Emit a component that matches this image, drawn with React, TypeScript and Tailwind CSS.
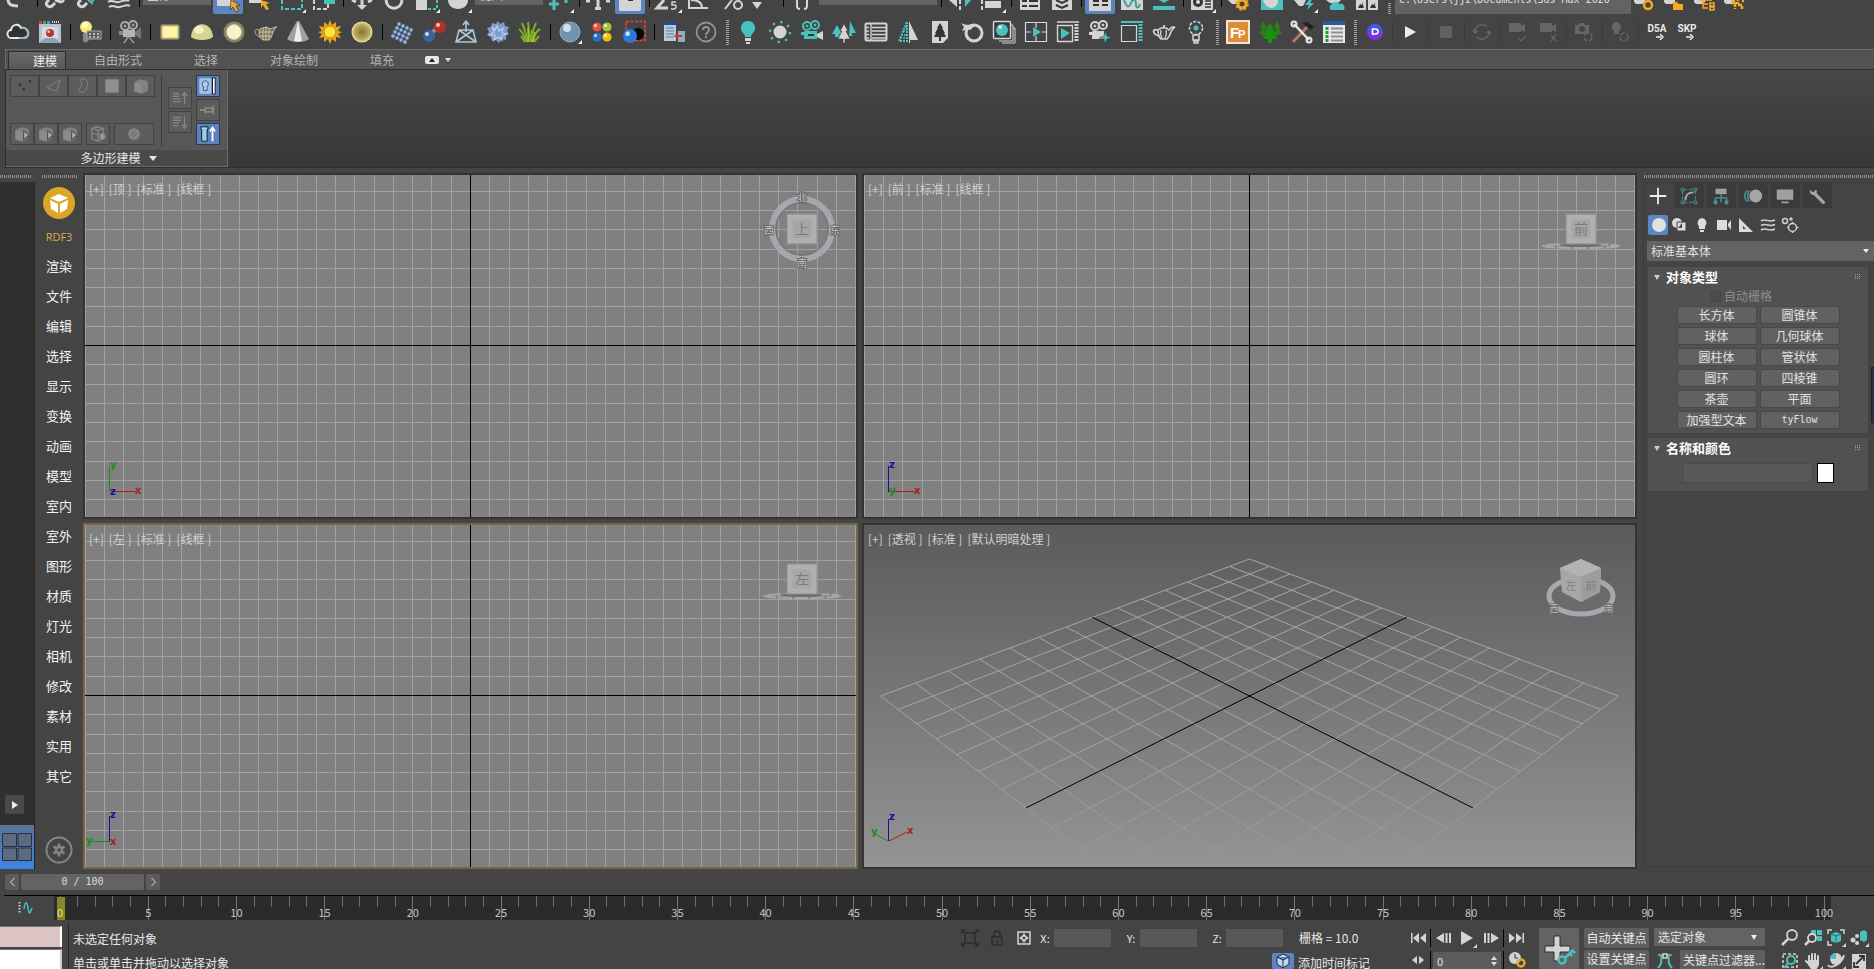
import React from 'react';

type IconProps = { children: React.ReactNode };

const teal = '#4bc1bd';
const light = '#d4d4d4';

const sideItems = [
  '渲染', '文件', '编辑', '选择', '显示', '变换', '动画', '模型', '室内',
  '室外', '图形', '材质', '灯光', '相机', '修改', '素材', '实用', '其它',
];

const ribbonTabs = [
  { name: '自由形式', width: 'w-[104px]' },
  { name: '选择', width: 'w-[72px]' },
  { name: '对象绘制', width: 'w-[104px]' },
  { name: '填充', width: 'w-[72px]' },
];

const objectTypes = [
  '长方体', '圆锥体', '球体', '几何球体', '圆柱体', '管状体',
  '圆环', '四棱锥', '茶壶', '平面', '加强型文本', 'tyFlow',
];

/* ---------- small shared parts ---------- */

const Sep = () => (
  <span className="flex w-2 shrink-0 justify-center self-center">
    <span className="h-4 w-px bg-black" />
  </span>
);

const TopSep = () => (
  <span className="flex h-[7px] w-1.5 shrink-0 justify-center">
    <span className="h-full w-px bg-black" />
  </span>
);

const ThinSep = () => (
  <span className="flex w-1 shrink-0 justify-center self-center">
    <span className="h-6 w-px bg-[#3b3b3b]" />
  </span>
);

const GripV = ({ height = 'h-[26px]' }: { height?: string }) => (
  <span className="flex w-2.5 shrink-0 justify-center self-center">
    <span className={`${height} w-[3px] bg-[repeating-linear-gradient(0deg,#a5a5a5_0_1px,transparent_1px_2px)]`} />
  </span>
);

const GripH = ({ className }: { className: string }) => (
  <div className={`h-[3px] bg-[repeating-linear-gradient(90deg,#8f8f8f_0_1px,transparent_1px_2px)] ${className}`} />
);

// 24px icon in a 32px wide slot of the second toolbar row
const Tool = ({ label, width = 'w-8', children }: { label: string; width?: string } & IconProps) => (
  <button aria-label={label} className={`flex h-full ${width} shrink-0 items-center justify-center`}>
    <svg viewBox="0 0 24 24" className="size-6">{children}</svg>
  </button>
);

// lower part of a main toolbar icon, the row is scrolled half out of the window
const Top = ({ label, width = 'w-8', active = false, children }: { label: string; width?: string; active?: boolean } & IconProps) => (
  <button aria-label={label} className={`flex h-3.5 ${width} shrink-0 justify-center`}>
    <svg viewBox="0 0 30 14" className={`h-3.5 w-[30px] ${active ? 'rounded-b-xs bg-[#5b86c3]' : ''}`}>{children}</svg>
  </button>
);

const Corner = () => <path d="M29 9v4h-4z" fill="#eee" />;

const DropSelect = ({ label, value, className }: { label: string; value: string; className: string }) => (
  <select aria-label={label} defaultValue={value} className={`block appearance-none bg-[#636363] text-[#e0e0e0] outline-none ${className}`}>
    <option>{value}</option>
  </select>
);

/* ---------- toolbars ---------- */

const MainToolbar = () => (
  <div className="flex h-4 shrink-0 items-start overflow-hidden">
    <Top label="重做" width="w-[34px]">
      <path d="M6 0c0 4 3 6 10 6" fill="none" stroke={light} strokeWidth="3" />
    </Top>
    <TopSep />
    <Top label="链接">
      <path d="M8 0l-2 2c-2 3 2 6 5 4l3-3M14 0l6 2c2-1 3-2 1-2" fill="none" stroke={light} strokeWidth="3" />
    </Top>
    <Top label="断开链接">
      <path d="M8 0l-2 2c-2 3 2 6 5 4l3-3" fill="none" stroke={light} strokeWidth="3" />
      <path d="M15 0l5 4M18 0l3 1" stroke={teal} strokeWidth="2" />
    </Top>
    <Top label="绑定到空间扭曲">
      <path d="M3 2c4-3 7 1 11 0s7-3 10-1M4 7c4-3 7 1 11 0s7-3 10-1" fill="none" stroke={light} strokeWidth="2" />
    </Top>
    <TopSep />
    <DropSelect label="选择过滤器" value="全部" className="-mt-[15px] h-5 w-[70px] border-x border-[#444] pl-1 text-xs" />
    <Top label="选择对象" active>
      <path d="M4 0h16v6H4z" fill={light} />
      <path d="M18 0l9 5-4 1 3 5-3 1-3-5-3 3z" fill="#f7a823" stroke="#222" strokeWidth=".6" />
    </Top>
    <Top label="按名称选择">
      <path d="M4 0h12v3H4z" fill={light} />
      <path d="M16 0l9 3-4 1 3 5-3 1-3-5-2 3z" fill="#f7a823" />
    </Top>
    <Top label="矩形选择区域">
      <path d="M5 0v9h20V0" fill="none" stroke={teal} strokeWidth="2" strokeDasharray="4 2" />
      <Corner />
    </Top>
    <Top label="窗口/交叉">
      <path d="M5 0v9h14V2" fill="none" stroke={light} strokeWidth="2" strokeDasharray="4 2" />
      <path d="M15 0h11v4H15z" fill={teal} />
    </Top>
    <TopSep />
    <Top label="移动">
      <path d="M15 0v6M5 0l4 2M25 0l-4 2" stroke={light} strokeWidth="3" />
      <path d="M10 5h10l-5 5z" fill={light} />
    </Top>
    <Top label="旋转">
      <path d="M7 0c1 11 15 11 16 0" fill="none" stroke={light} strokeWidth="3" />
    </Top>
    <Top label="缩放">
      <path d="M5 0h11v10H5z" fill={light} />
      <path d="M17 9h9V0" fill="none" stroke={teal} strokeWidth="2" strokeDasharray="3 2" />
      <Corner />
    </Top>
    <Top label="放置">
      <path d="M5 0h20c0 5-4 9-10 9S5 5 5 0z" fill={light} />
      <Corner />
    </Top>
    <DropSelect label="参考坐标系" value="视图" className="-mt-[15px] h-5 w-[70px] border-x border-[#444] pl-1 text-xs" />
    <Top label="使用轴点中心">
      <path d="M9 0v10M4 4h10M21 0v3" stroke={teal} strokeWidth="3" />
      <Corner />
    </Top>
    <TopSep />
    <Top label="选择并操纵">
      <path d="M15 0v10M3 1h4M23 1h4" stroke={light} strokeWidth="3" />
      <path d="M12 7h6v3h-6z" fill={light} />
    </Top>
    <Top label="键盘快捷键覆盖切换" active>
      <path d="M4 0h22v9c0 2-1 2-2 2H6c-1 0-2 0-2-2z" fill={light} />
      <path d="M13 0h5v1h-5z" fill="#333" />
    </Top>
    <TopSep />
    <Top label="捕捉开关">
      <path d="M11 0L4 8h11" fill="none" stroke={light} strokeWidth="3" />
      <path d="M23 2h-4v3h3c2 1 1 4-1 4h-3" fill="none" stroke={light} strokeWidth="1.5" />
      <Corner />
    </Top>
    <Top label="角度捕捉">
      <path d="M4 0v8h19M6 0c8 0 11 3 11 8" fill="none" stroke={light} strokeWidth="2" />
    </Top>
    <Top label="百分比捕捉">
      <path d="M15 0L8 9" stroke={light} strokeWidth="2" />
      <circle cx="21" cy="5" r="4" fill="none" stroke={light} strokeWidth="2" />
    </Top>
    <Top label="微调器捕捉">
      <path d="M3 2h10l-5 7z" fill={light} />
    </Top>
    <TopSep />
    <Top label="编辑命名选择集">
      <path d="M10 0v6c0 2 1 3 3 3M20 0v6c0 2-1 3-3 3" fill="none" stroke={light} strokeWidth="2" />
    </Top>
    <DropSelect label="命名选择集" value="" className="-mt-[15px] h-5 w-[120px] border-x border-[#444]" />
    <TopSep />
    <Top label="镜像">
      <path d="M4 0h8v7z" fill={light} />
      <path d="M26 0h-6v7z" fill={teal} />
      <path d="M15 0v10" stroke={light} strokeWidth="2" strokeDasharray="4 2" />
    </Top>
    <Top label="对齐">
      <path d="M8 1h16v7H8z" fill={light} />
      <path d="M5 0v10" stroke={light} strokeWidth="2" strokeDasharray="4 2" />
      <Corner />
    </Top>
    <TopSep />
    <Top label="场景资源管理器">
      <path d="M5 0h20v10H5z" fill={light} />
      <path d="M7 1h5M14 1h9M7 6h5M14 6h9" stroke="#333" strokeWidth="2" />
    </Top>
    <Top label="层资源管理器">
      <path d="M5 0h20v10H5z" fill={light} />
      <path d="M9 0l6 3 6-3M9 5l6 3 6-3" fill="none" stroke="#333" strokeWidth="2" />
    </Top>
    <TopSep />
    <Top label="显示功能区" active>
      <path d="M4 0h22v11H4z" fill={light} />
      <path d="M8 1h6M17 1h6M8 5h6M17 5h6" stroke="#333" strokeWidth="2" />
    </Top>
    <Top label="曲线编辑器">
      <path d="M4 0h22v10H4z" fill={light} />
      <path d="M7 0c3 8 5 8 7 3s5-4 5 1 3 4 4 0" fill="none" stroke="#3e9c9a" strokeWidth="2" />
    </Top>
    <Top label="图解视图">
      <path d="M4 6h22v4H4z" fill={teal} />
      <path d="M10 0h10l-5 3z" fill={teal} />
    </Top>
    <TopSep />
    <Top label="材质编辑器">
      <path d="M4 0h22v10H4z" fill={light} />
      <circle cx="11" cy="2" r="5" fill="#333" />
      <path d="M8 0l6 5M8 5l6-5M18 1h6M18 4h6M18 7h6" stroke="#333" strokeWidth="1.5" />
      <circle cx="11" cy="2" r="2" fill="#ddd" />
      <Corner />
    </Top>
    <TopSep />
    <Top label="渲染设置">
      <path d="M3 0h12l-4 4H7z" fill={light} />
      <circle cx="17" cy="4" r="4" fill="none" stroke="#f7a823" strokeWidth="3" />
      <circle cx="17" cy="4" r="6" fill="none" stroke="#f7a823" strokeWidth="1.5" strokeDasharray="2.5 2.2" />
    </Top>
    <Top label="渲染帧窗口">
      <path d="M4 0h22v10H4z" fill={teal} />
      <path d="M6 0h15c0 4-2 7-6 8-5 0-8-4-9-8z" fill={light} />
    </Top>
    <Top label="渲染产品">
      <path d="M5 0h12l-3 6h-4z" fill={light} />
      <path d="M20 0l-4 5h4l-2 5 7-7h-4l2-3z" fill={teal} />
      <Corner />
    </Top>
    <Top label="在线渲染">
      <path d="M5 0h15l-3 3H9z" fill={light} />
      <path d="M10 10a3 3 0 010-5c2-4 7-4 8-1 4-1 7 2 5 6z" fill={teal} />
    </Top>
    <Top label="打开 A360 库">
      <path d="M3 0h10v10H3zM15 0h10v10H15z" fill={light} />
      <path d="M5 8l2-4 2 1V2l2 6zM17 8l2-4 2 1V2l2 6z" fill="#333" />
    </Top>
    <GripV height="h-3" />
    <DropSelect
      label="项目文件夹"
      value="C:\Users\jjz\Documents\3ds Max 2020"
      className="-mt-4 h-[30px] w-[238px] border-x border-[#444] pl-1 font-['DejaVu_Sans_Mono',monospace] text-[10px]"
    />
    {['设置活动项目', '创建空', '创建默认', '从当前创建'].map((name, i) => (
      <Top key={name} label={name} width="w-[30px]">
        <path d="M2 0h11v2l-3 2H4l-2-2z" fill={light} />
        {i === 0 && <circle cx="16" cy="5" r="4" fill="none" stroke="#f7a823" strokeWidth="2.5" />}
        {i === 1 && <path d="M11 2h4l2 2h4v6H11z" fill="#f7a823" />}
        {i === 2 && <path d="M7 0h13M11 0v8h5M11 4h5M18 3h4v3h-4zM18 7h4v3h-4z" fill="none" stroke="#f7a823" strokeWidth="1.5" />}
        {i === 3 && <path d="M11 0v3h5V0M13 3v6M16 5h4v4M20 1h2" fill="none" stroke="#f7a823" strokeWidth="2.5" strokeDasharray="4 1" />}
      </Top>
    ))}
  </div>
);

const Camera = () => (
  <>
    <circle cx="7" cy="6" r="4" fill="none" strokeWidth="2" />
    <circle cx="15" cy="5" r="4" fill="none" strokeWidth="2" />
    <circle cx="7" cy="6" r="1" />
    <circle cx="15" cy="5" r="1" />
  </>
);

const Balls = ({ x, y, r, fill }: { x: number; y: number; r: number; fill: string }) => (
  <>
    <circle cx={x} cy={y} r={r} fill={fill} />
    <circle cx={x - r / 3} cy={y - r / 3} r={r / 3} fill="#fff" opacity=".75" />
  </>
);

const RenderToolbar = () => (
  <div className="flex h-[33px] shrink-0 items-center pb-0.5 pl-0.5">
    <Tool label="云">
      <path d="M6 18a4 4 0 01-1-8c1-6 8-7 10-2 5-1 8 3 7 7-1 2-2 3-4 3z" fill="#323232" stroke="#dfe9f0" strokeWidth="2" />
      <path d="M15 8c5-1 8 3 7 7-1 2-2 3-4 3h-5" fill="none" stroke="#9db6c6" strokeWidth="2" />
    </Tool>
    <Tool label="帧缓存">
      <path d="M1 2h22v21H1z" fill="#b8c5d0" />
      <path d="M1 1h22v3H1z" fill="#444" />
      <path d="M1 1h3v3H1z" fill="#e33" />
      <path d="M5 1h3v3H5z" fill="#3b3" />
      <path d="M9 1h3v3H9z" fill="#49f" />
      <path d="M14 2h8" stroke="#ddd" strokeWidth="2" strokeDasharray="1 1" />
      <path d="M4 7h16v12H4z" fill="#d3dce4" />
      <path d="M1 23l6-5h10l6 5z" fill="#8fa2b3" />
      <Balls x={12} y={13} r={4} fill="#b8382c" />
    </Tool>
    <Sep />
    <Tool label="灯光列表">
      <circle cx="8" cy="7" r="6" fill="#ffe86b" />
      <circle cx="7" cy="5" r="3" fill="#fffbd0" />
      <path d="M5 13h6v7l-3 3-3-2z" fill="#8b8b86" />
      <path d="M9 11h14v8H9z" fill="#4d5d6e" stroke="#9eaab4" />
      <path d="M11 14h2M15 14h2M19 14h2M11 17h2M15 17h2M19 17h2" stroke="#f0d989" strokeWidth="1.5" />
    </Tool>
    <Sep />
    <Tool label="摄影机">
      <g stroke="#a9a9a9" fill="#a9a9a9"><Camera /></g>
      <path d="M5 10h12v7H5z" fill="#b5b5b5" />
      <path d="M1 11h4v4H1z" fill="#888" />
      <path d="M17 12l6-5v12l-6-4z" fill="#777" />
      <path d="M10 17l-4 6M11 17l5 6" stroke="#999" strokeWidth="1.5" />
    </Tool>
    <Sep />
    <Tool label="平面光">
      <rect x="2" y="4" width="20" height="16" rx="3" fill="#79775f" />
      <rect x="4" y="6" width="16" height="12" fill="#fdf6a4" stroke="#d8c77a" />
    </Tool>
    <Tool label="穹顶光">
      <path d="M1 17C2 0 22 0 23 17c-4 4-18 4-22 0z" fill="#d8d394" />
      <ellipse cx="9" cy="10" rx="5" ry="4" fill="#f4f1c6" />
    </Tool>
    <Tool label="球光">
      <circle cx="12" cy="12" r="10.5" fill="#87856f" />
      <circle cx="12" cy="12" r="7.5" fill="#f7f3cd" stroke="#c9c48a" />
    </Tool>
    <Tool label="网格光">
      <path d="M6 9c3-2 8-2 11 0l4-2h2c-2 1-3 3-4 5-1 4-2 6-4 8H9c-2-1-4-4-4-7z" fill="#77725a" stroke="#c9c29d" />
      <path d="M5 10c-6-2-5 5 1 7M9 8v12M12 6v14M15 8v12M5 12h14M6 16h12" fill="none" stroke="#d9d2ae" strokeWidth=".8" />
    </Tool>
    <Tool label="IES 光">
      <path d="M11 1h2l10 18c-4 4-18 4-22 0z" fill="#a0a0a0" />
      <path d="M12 1l4 20c-3 1-6 1-8 0z" fill="#ececec" />
    </Tool>
    <Tool label="太阳光">
      <path d="M12 0l2 5 4-3v5l5-1-3 5 4 1-4 2 3 4-5-1v5l-4-3-2 5-2-5-4 3v-5l-5 1 3-4-4-2 4-1-3-5 5 1V2l4 3z" fill="#e8a61c" />
      <circle cx="12" cy="12" r="6" fill="#ffe23d" stroke="#c98511" />
    </Tool>
    <Tool label="环境光">
      <defs>
        <radialGradient id="ambient">
          <stop offset="0" stopColor="#857634" />
          <stop offset=".7" stopColor="#b8a95a" />
          <stop offset="1" stopColor="#ece6a5" />
        </radialGradient>
      </defs>
      <circle cx="12" cy="12" r="10.5" fill="url(#ambient)" />
    </Tool>
    <Sep />
    <Tool label="阵列">
      {[0, 1, 2, 3].map((r) =>
        [0, 1, 2, 3].map((c) => (
          <circle key={`${r}${c}`} cx={9 + c * 4 - r * 2} cy={4 + c * 2 + r * 4} r="2.2" fill="#9db8d8" stroke="#334963" strokeWidth=".8" />
        )),
      )}
    </Tool>
    <Tool label="代理">
      <path d="M7 15l10-8" stroke="#999" strokeWidth="4" />
      <Balls x={7} y={16} r={6} fill="#37659c" />
      <Balls x={18} y={7} r={6} fill="#b5302a" />
    </Tool>
    <Tool label="裁剪">
      <path d="M2 22l3-12h14l3 12zM5 10l17 12M19 10L2 22M12 2v10M9 5l3-4 3 4" fill="none" stroke="#a9c6d6" strokeWidth="1.6" />
    </Tool>
    <Tool label="毛发">
      <path d="M12 1l2 3 4-2 1 4 4 1-2 4 2 3-3 2v4l-4-1-3 4-3-3-4 1-1-4-4-2 2-3-2-4 4-1 1-4 4 1z" fill="#7d9cc9" />
      <path d="M6 7l3 3 2-4 2 5 4-3-1 5 4 1-5 2 1 4-4-3-4 3 1-5-5 0 4-3z" fill="none" stroke="#b9d0f0" strokeWidth="1.2" />
    </Tool>
    <Tool label="草地">
      <path d="M8 22C6 15 4 11 1 9M9 22C8 12 6 7 4 3M11 22c0-9 0-14-1-20M13 22c1-8 2-13 5-19M15 22c1-6 3-11 7-13M12 22l2-12M7 22l-4-6M16 22l5-6" fill="none" stroke="#7fae22" strokeWidth="2" />
      <path d="M10 22V8M14 22l3-10" stroke="#c2dc55" strokeWidth="1" />
    </Tool>
    <Sep />
    <Tool label="材质球">
      <circle cx="12" cy="12" r="10" fill="#7293ad" stroke="#93b0c5" />
      <circle cx="9" cy="8" r="4" fill="#cfe0ea" />
      <path d="M24 20v4h-4z" fill="#eee" />
    </Tool>
    <Tool label="材质库">
      <Balls x={7} y={7} r={4.6} fill="#e4513f" />
      <Balls x={17} y={7} r={4.6} fill="#a6c43a" />
      <Balls x={7} y={17} r={4.6} fill="#2271c4" />
      <Balls x={17} y={17} r={4.6} fill="#f3bd16" />
    </Tool>
    <Tool label="材质蒙版">
      <rect x="4" y="1.5" width="19" height="19" fill="none" stroke="#e8473d" strokeWidth="1.6" strokeDasharray="3 1.5" />
      <circle cx="16" cy="14" r="6" fill="#050505" />
      <Balls x={8} y={16} r={7} fill="#2b78d6" />
    </Tool>
    <Sep />
    <Tool label="转换">
      <path d="M2 2h12v19H2z" fill="#b7cadc" />
      <path d="M2 2h12v3H2z" fill="#27479a" />
      <path d="M4 8h8M4 11h8M4 14h8M4 17h8" stroke="#667f99" />
      <path d="M16 11h7v11h-7z" fill="#93abc2" />
      <path d="M20 15h-4v-2l-4 3 4 3v-2h4z" fill="#cc3322" />
    </Tool>
    <Tool label="帮助">
      <circle cx="12" cy="12" r="9.5" fill="none" stroke="#8c939b" strokeWidth="1.8" />
      <path d="M9 10c0-4 6-4 6 0 0 2-3 2-3 5M12 16v2" fill="none" stroke="#8c939b" strokeWidth="2" />
    </Tool>
    <GripV />
    <Tool label="灯光">
      <path d="M12 1a7 7 0 015 12c-1 1-2 2-2 4H9c0-2-1-3-2-4a7 7 0 015-12z" fill={teal} />
      <path d="M9 18h6v3H9zM10 22h4v2h-4z" fill={light} />
    </Tool>
    <Tool label="日光">
      <circle cx="12" cy="12" r="6.5" fill={light} />
      <circle cx="12" cy="12" r="10" fill="none" stroke={teal} strokeWidth="2.4" strokeDasharray="2.4 5.45" />
    </Tool>
    <Tool label="物理摄影机">
      <g stroke={teal} fill={teal}><Camera /></g>
      <path d="M4 11h13v8H4zM1 12h3v3H1z" fill={teal} />
      <path d="M8 15h6" stroke="#333" strokeWidth="2" />
      <path d="M17 14l6-3v9l-6-3z" fill={light} />
    </Tool>
    <Tool label="森林">
      <path d="M18 1l6 12h-4v3h-3zM5 5l5 9H7v3H3v-3H0z" fill={teal} />
      <path d="M12 4l4 7h-2l4 8h-5v4h-2v-4H6l4-8H8z" fill={light} stroke="#444" strokeWidth=".6" />
    </Tool>
    <Tool label="列表">
      <rect x="1.5" y="3.5" width="21" height="17" rx="1" fill="none" stroke={light} strokeWidth="2" />
      <path d="M7 4v16M8 7.5h14M8 11h14M8 14.5h14M8 18h14M2 7.5h3M2 11h3M2 14.5h3M2 18h3" stroke={light} strokeWidth="1.4" />
    </Tool>
    <Tool label="混合">
      <path d="M13 1l9 19h-8v3h-1z" fill={light} />
      <path d="M11 2v19H3z" fill="none" stroke={teal} strokeWidth="2" strokeDasharray="2 1" />
      <path d="M7 11h4M5 15h6M9 7h2M4 18h7" stroke={teal} strokeWidth="1.6" strokeDasharray="2 1" />
    </Tool>
    <Tool label="植物文档">
      <path d="M4 1h16v17l-5 5H4z" fill={light} />
      <path d="M12 3l3 5h-1l3 5h-1l2 4h-5v4h-2v-4H6l2-4H7l3-5H9z" fill="#333" />
    </Tool>
    <Tool label="同步">
      <circle cx="14" cy="13" r="8" fill="none" stroke={light} strokeWidth="3" />
      <path d="M1 3c6 3 10 1 15 2l-6 5-3-1 1 4-3-3-3 1 2-4z" fill={light} />
    </Tool>
    <Tool label="渲染层">
      <path d="M19 5h2v16H7M21 8h2v15H10" fill="none" stroke={light} />
      <rect x="1.5" y="1.5" width="17" height="17" rx="1" fill="#3a3a3a" stroke={light} strokeWidth="1.5" />
      <circle cx="10" cy="10" r="6" fill={teal} />
      <circle cx="8" cy="7" r="2" fill="#bfeeec" />
    </Tool>
    <Tool label="四视图播放">
      <path d="M1.5 2.5h21v19h-21zM12 2v6M12 16v6M2 12h5M18 12h5" fill="none" stroke={light} strokeWidth="1.2" />
      <path d="M9 7l8 5-8 5z" fill={teal} />
    </Tool>
    <Tool label="播放面板">
      <path d="M1 2h22M1.5 5.5h15v16h-15z" fill="none" stroke={light} strokeWidth="1.4" />
      <path d="M5 8l9 5-9 6z" fill={teal} />
      <path d="M20.5 4v18" stroke={light} strokeWidth="4" strokeDasharray="2 1" />
    </Tool>
    <Tool label="添加摄影机">
      <g stroke={light} fill={light}><Camera /></g>
      <path d="M4 11h12v8H4zM1 12h3v3H1z" fill={light} />
      <path d="M17 11l2 5 5 2-5 1-2 5-1-5-5-1 5-2z" fill={teal} stroke="#333" strokeWidth=".5" />
    </Tool>
    <Tool label="面板">
      <path d="M1 2h22" stroke={teal} strokeWidth="2" />
      <path d="M1.5 5.5h15v16h-15z" fill="none" stroke={light} strokeWidth="1.2" />
      <path d="M20.5 4v18" stroke={teal} strokeWidth="4" strokeDasharray="2 1" />
    </Tool>
    <Tool label="茶壶">
      <path d="M6 10c3-3 8-3 11 0l3-3h3c-2 1-3 3-4 5-1 3-2 5-4 7H9c-2-2-3-5-3-9z" fill="none" stroke={light} strokeWidth="1.6" />
      <path d="M6 10c-6-2-6 4 1 6M12 5v3" fill="none" stroke={light} strokeWidth="1.8" />
      <path d="M9 10c-1 3 0 6 1 8M14 10c1 3 0 6-1 8" fill="none" stroke={light} strokeWidth="1.2" />
    </Tool>
    <Tool label="灯泡设置">
      <circle cx="12" cy="8" r="6.5" fill="none" stroke={light} strokeWidth="1.5" strokeDasharray="3 1.5" />
      <circle cx="12" cy="8" r="2.5" fill={teal} />
      <path d="M9 15h6v5H9zM10 21h4v2h-4z" fill="none" stroke={light} strokeWidth="1.5" />
    </Tool>
    <GripV />
    <Tool label="Forest Pack">
      <rect x="1" y="1" width="22" height="22" fill="#dc8c3b" stroke="#f3e6d6" strokeWidth="2" />
      <text x="4" y="18" fontSize="15" fontWeight="700" fill="#fff" fontFamily="Liberation Sans, sans-serif">F</text>
      <text x="12" y="18" fontSize="11" fontWeight="700" fill="#fff" fontFamily="Liberation Sans, sans-serif">P</text>
    </Tool>
    <Tool label="树木">
      <path d="M5 1l4 7-2 2 2 4-3 3-3-3H1l3-5-2-2zM19 1l3 6-1 1 3 6h-3l-2 3-3-4 2-4-2-2z" fill="#2d7c1c" />
      <path d="M12 3l4 6-1 1 3 5h-1l2 4h-5v4h-4v-4H5l3-4H6l3-5-1-1z" fill="#19930f" />
    </Tool>
    <Tool label="工具">
      <path d="M3 22L18 6" stroke="#b9776c" strokeWidth="3" />
      <path d="M12 3l6-1 6 5-3 3-4-3z" fill="#222" />
      <path d="M4 4l15 16" stroke="#e6e6e6" strokeWidth="2.5" />
      <circle cx="4" cy="4" r="2.5" fill="none" stroke="#e6e6e6" strokeWidth="2" />
      <circle cx="19" cy="20" r="2.5" fill="none" stroke="#e6e6e6" strokeWidth="2" />
    </Tool>
    <Tool label="清单">
      <path d="M1 1h22v22H1z" fill="#e8e8e8" />
      <path d="M1 1h22v4H1z" fill="#2a5aa0" />
      <path d="M5 7v15" stroke="#1f9d2c" strokeWidth="3" strokeDasharray="3 1" />
      <path d="M9 8.5h12M9 12.5h12M9 16.5h12M9 20.5h12" stroke="#8f8f8f" strokeWidth="2" />
    </Tool>
    <GripV />
    <Tool label="D5" width="w-[30px]">
      <defs>
        <linearGradient id="d5" x1="0" y1="0" x2="0" y2="1">
          <stop offset="0" stopColor="#2e62ee" />
          <stop offset="1" stopColor="#9722e0" />
        </linearGradient>
      </defs>
      <circle cx="12" cy="12" r="8" fill="url(#d5)" />
      <path d="M9.5 15V9h3a2.500 2.500 0 010 5h-3" fill="none" stroke="#fff" strokeWidth="1.6" />
    </Tool>
    <ThinSep />
    <Tool label="播放"><path d="M7 6l11 6-11 6z" fill="#efefef" /></Tool>
    <ThinSep />
    <Tool label="停止"><rect x="6" y="6" width="12" height="12" rx="2" fill="#636363" /></Tool>
    <ThinSep />
    <Tool label="刷新">
      <path d="M5 12a7 7 0 0112-5M19 12a7 7 0 01-12 5M3 10l2 3 3-2M21 14l-2-3-3 2" fill="none" stroke="#666" strokeWidth="1.4" />
    </Tool>
    <ThinSep />
    <Tool label="同步相机" width="w-[31px]">
      <path d="M3 3h12v3l4-2v8l-4-2v2H3z" fill="#666" />
      <path d="M13 18l2 3 5-5" fill="none" stroke="#666" strokeWidth="1.2" />
    </Tool>
    <Tool label="取消同步" width="w-[31px]">
      <path d="M3 3h12v3l4-2v8l-4-2v2H3z" fill="#666" />
      <path d="M14 15l5 6M19 15l-5 6" stroke="#666" strokeWidth="1.2" />
    </Tool>
    <ThinSep />
    <Tool label="更新相机">
      <path d="M3 5h3l2-2h4l1 2h4v9H3z" fill="#666" />
      <circle cx="10" cy="9" r="3" fill="#444" />
      <circle cx="16" cy="17" r="4" fill="none" stroke="#666" strokeWidth="1.3" strokeDasharray="5 2" />
    </Tool>
    <ThinSep />
    <Tool label="更新灯光">
      <path d="M8 2a5 5 0 013 9v3H6v-3a5 5 0 012-9z" fill="#666" />
      <circle cx="16" cy="17" r="4" fill="none" stroke="#666" strokeWidth="1.3" strokeDasharray="5 2" />
    </Tool>
    <ThinSep />
    {['D5A', 'SKP'].map((name) => (
      <button key={name} className="flex w-[30px] shrink-0 flex-col pl-1 text-[10px] leading-[11px] font-bold text-[#e8e8e8]">
        <span className="font-['Roboto',sans-serif]">{name}</span>
        <svg viewBox="0 0 8 6" className="ml-3 h-1.5 w-2"><path d="M0 3h5M4 0l3 3-3 3" fill="none" stroke="#eee" strokeWidth="1.5" /></svg>
      </button>
    ))}
  </div>
);

/* ---------- ribbon ---------- */

const RibbonBtn = ({ label, className = 'w-6', on = false, children }: { label: string; className?: string; on?: boolean } & IconProps) => (
  <button
    aria-label={label}
    className={`flex h-[22px] items-center justify-center border ${on ? 'border-[#26395f] bg-[#5f80b8]' : 'border-[#434343] bg-[#5c5c5c]'} ${className}`}
  >
    <svg viewBox="0 0 20 20" className="size-[18px]" fill="none" stroke="#858585">{children}</svg>
  </button>
);

const Cube = () => (
  <>
    <path d="M3 6l6-3 8 2v10l-6 3-8-2z" fill="#808080" stroke="#888" />
    <path d="M3 6l8 2v10l-8-2z" fill="#8b8b8b" stroke="none" />
  </>
);

const Ribbon = () => (
  <div className="shrink-0 pl-[5px]">
    <div className="flex h-[21px] items-end border-t border-b border-l border-t-[#6b6b6b] border-b-[#2e2e2e] border-l-[#6b6b6b] bg-[#525252] text-xs leading-4 text-[#b4b4b4]">
      <button className="ml-0.5 h-[18px] w-[58px] border border-b-0 border-[#2e2e2e] bg-linear-to-b from-[#6a6a6a] to-[#585858] pl-4 text-[#e6e6e6]">建模</button>
      <div className="flex h-[18px] items-center">
        {ribbonTabs.map((tab) => (
          <button key={tab.name} className={tab.width}>{tab.name}</button>
        ))}
      </div>
      <button aria-label="最小化功能区" className="ml-[7px] flex h-[18px] items-center gap-1.5">
        <svg viewBox="0 0 14 8" className="h-2 w-3.5"><rect width="14" height="8" rx="2" fill="#e6e8ee" /><path d="M4 6l3-4 3 4z" fill="#222" /></svg>
        <svg viewBox="0 0 6 4" className="h-1 w-1.5"><path d="M0 0h6L3 4z" fill="#ddd" /></svg>
      </button>
    </div>
    <div className="flex h-[98px] border-b border-l border-[#2e2e2e] bg-linear-to-b from-[#474747] to-[#383838]">
      <div className="flex w-[222px] flex-col border-r border-b border-[#6b6b6b] bg-[#575757]">
        <div className="flex flex-1 gap-1.5 pt-[5px] pl-1">
          <div className="flex h-[70px] w-[145px] flex-col justify-between">
            <div className="flex">
              <RibbonBtn label="顶点" className="w-[29px]"><path d="M4 8h1v1H4zM8 13h1v1H8zM15 4h1v1h-1z" stroke="#333" strokeWidth="1.5" /></RibbonBtn>
              <RibbonBtn label="边" className="w-[29px]"><path d="M2 12L17 3l-4 13z" /></RibbonBtn>
              <RibbonBtn label="边界" className="w-[29px]"><path d="M7 3c5-3 10 1 8 6s-1 7-5 8-6-3-3-6 0-6 0-8z" /></RibbonBtn>
              <RibbonBtn label="多边形" className="w-[29px]"><path d="M3 3h14v14H3z" fill="#909090" /></RibbonBtn>
              <RibbonBtn label="元素" className="w-[29px]"><Cube /></RibbonBtn>
            </div>
            <div className="flex gap-1">
              <div className="flex">
                {['预览关闭', '预览子对象', '预览多个'].map((name) => (
                  <RibbonBtn key={name} label={name}>
                    <Cube />
                    <path d="M12 6v11l2-3 3 4 1-1-3-4h3z" fill="#bbb" stroke="#3a3a3a" />
                  </RibbonBtn>
                ))}
              </div>
              <RibbonBtn label="堆栈"><path d="M3 4l6-2 7 2v10l-6 4-7-3zM3 4l7 2 6-2M3 9l7 2 6-2M10 6v12" strokeWidth="1.5" /><circle cx="15" cy="13" r="3" fill="#999" /></RibbonBtn>
              <RibbonBtn label="软选择" className="w-10"><circle cx="10" cy="10" r="5" fill="#7c7c7c" strokeWidth="3" /></RibbonBtn>
            </div>
          </div>
          <div className="h-[72px] w-px bg-[#3c3c3c]" />
          <div className="flex gap-1">
            <div className="flex flex-col gap-0.5 pt-3">
              <RibbonBtn label="上一修改器"><path d="M2 5h7M2 8h7M2 11h9M2 14h9M15 17V5M12 8l3-4 3 4" strokeWidth="1.5" /></RibbonBtn>
              <RibbonBtn label="下一修改器"><path d="M2 5h9M2 8h9M2 11h7M2 14h7M15 4v12M12 13l3 4 3-4" strokeWidth="1.5" /></RibbonBtn>
            </div>
            <div className="flex flex-col gap-0.5">
              <RibbonBtn label="显示最终结果" on>
                <path d="M1 2h12v16H1z" fill="#a5bddd" stroke="#bcd0ea" />
                <path d="M7 4a4 4 0 012 7v4H5v-4a4 4 0 012-7z" fill="#9fd0f0" stroke="#3a5578" />
                <path d="M15 1h3v18h-3z" fill="#fff" stroke="#111" />
              </RibbonBtn>
              <RibbonBtn label="锁定堆栈"><path d="M1 10h6M7 6v8M8 8h7v4H8M16 5v10" strokeWidth="2" /></RibbonBtn>
              <RibbonBtn label="切换命令面板" on>
                <path d="M2 2h8v3H9v13H3V5H2z" fill="#8ed6ee" stroke="#111" />
                <path d="M15 18V4M12 7l3-4 3 4" stroke="#fff" strokeWidth="2" />
              </RibbonBtn>
            </div>
          </div>
        </div>
        <button className="flex h-4 items-center justify-center gap-2 bg-[#4a4a4a] pl-1 text-xs leading-4 text-[#e6e6e6]">
          多边形建模
          <svg viewBox="0 0 8 5" className="h-[5px] w-2"><path d="M0 0h8L4 5z" fill="#e6e6e6" /></svg>
        </button>
      </div>
    </div>
  </div>
);

/* ---------- left column ---------- */

const LeftDock = () => (
  <div className="flex w-[83px] shrink-0">
    <div className="flex w-[35px] flex-col">
      <GripH className="mt-[7px] mr-[3px] mb-1" />
      <div className="flex flex-1 flex-col border-r border-[#252525] bg-[#303030]">
        <div className="flex-1" />
        <button aria-label="展开布局" className="mb-[11px] ml-[5px] flex size-[19px] items-center justify-center rounded-xs bg-[#4a4a4a]">
          <svg viewBox="0 0 6 8" className="h-2 w-1.5"><path d="M0 0l6 4-6 4z" fill="#eee" /></svg>
        </button>
        <button aria-label="四视图布局" className="flex h-11 items-center justify-center bg-linear-to-b from-[#5c7394] to-[#3d84e6]">
          <svg viewBox="0 0 30 28" className="h-7 w-[30px]" fill="#5c6b80" stroke="#243042">
            <path d="M.5.5h14v13H.5zM16 .5h13.5v13H16zM.5 15h14v12.500H.5zM16 15h13.5v12.500H16z" />
          </svg>
        </button>
      </div>
    </div>
    <nav className="flex flex-1 flex-col items-center">
      <GripH className="mt-[7px] mr-1.5 w-[35px] self-end" />
      <svg viewBox="0 0 32 32" className="mt-[9px] size-8">
        <circle cx="16" cy="16" r="16" fill="#daa628" />
        <path d="M7 11l9-4 9 4-9 4zM7 13l8 4v9l-7-4zM25 13l-8 4v9l7-4z" fill="#fff" />
      </svg>
      <span className="mt-2 h-5 font-['Open_Sans','Noto_Sans',sans-serif] text-[11px] leading-5 text-[#d9b04a]">RDF3</span>
      <div className="mt-1 flex flex-col">
        {sideItems.map((item) => (
          <button key={item} className="h-[30px] text-[13px] leading-[30px] text-[#f2f2f2]">{item}</button>
        ))}
      </div>
      <button aria-label="设置" className="mt-auto mb-[5px]">
        <svg viewBox="0 0 28 28" className="block size-7" fill="none" stroke="#85858d">
          <circle cx="14" cy="14" r="12.5" strokeWidth="2" />
          <circle cx="14" cy="14" r="3" strokeWidth="2.5" />
          <path d="M14 7.5v4M14 16.500v4M8.500 10.700l3.500 2M16 15.300l3.500 2M19.500 10.700l-3.500 2M12 15.300l-3.500 2" strokeWidth="2.5" />
        </svg>
      </button>
    </nav>
  </div>
);

/* ---------- viewports ---------- */

const CELL = 19.26;
const steps = Array.from({ length: 121 }, (_, i) => i - 60);

const FlatGrid = () => (
  <svg className="absolute inset-0 size-full" shapeRendering="crispEdges">
    <svg x="50%" y="50%" className="overflow-visible">
      {steps.filter((i) => i !== 0).map((i) => (
        <path key={i} d={`M${Math.round(i * CELL)} -1200v2400M-1200 ${Math.round(i * CELL) - 0.5}h2400`} stroke="#a1a1a1" />
      ))}
      <path d="M0 -1200v2400M-1200 -.5h2400" stroke="#000" />
    </svg>
  </svg>
);

// ground plane of 14 x 14 cells seen from the corner
const project = (a: number, b: number) => {
  const w = 1 - 0.0249 * (a + b);
  return `${((26.35 * (a - b)) / w).toFixed(1)} ${((13.2 * (a + b)) / w).toFixed(1)}`;
};

const PerspectiveGrid = () => {
  const lines = Array.from({ length: 15 }, (_, i) => i - 7);
  return (
    <svg className="absolute inset-0 size-full">
      <svg x="50%" y="50%" className="overflow-visible">
        <defs>
          <linearGradient id="fade" gradientUnits="userSpaceOnUse" x1="0" y1="-140" x2="0" y2="172">
            <stop offset="0" stopColor="#a6a6a6" />
            <stop offset=".6" stopColor="#a2a2a2" />
            <stop offset="1" stopColor="#959595" />
          </linearGradient>
        </defs>
        {lines.filter((i) => i !== 0).map((i) => (
          <path key={i} d={`M${project(i, -7)}L${project(i, 7)}M${project(-7, i)}L${project(7, i)}`} stroke="url(#fade)" />
        ))}
        <path d={`M${project(0, -7)}L${project(0, 7)}M${project(-7, 0)}L${project(7, 0)}`} stroke="#000" />
      </svg>
    </svg>
  );
};

type View = {
  name: string;
  shading: string;
  kind: 'top' | 'front' | 'left' | 'persp';
};

const views: View[] = [
  { name: '顶', shading: '线框', kind: 'top' },
  { name: '前', shading: '线框', kind: 'front' },
  { name: '左', shading: '线框', kind: 'left' },
  { name: '透视', shading: '默认明暗处理', kind: 'persp' },
];

const ViewCube = ({ kind }: { kind: View['kind'] }) => (
  <svg viewBox="0 0 80 80" className="absolute top-3.5 right-3.5 size-20" fontFamily="Noto Sans CJK SC, sans-serif">
    {kind === 'top' && (
      <>
        <circle cx="40" cy="40" r="30" fill="none" stroke="#a4a8ae" strokeWidth="6" />
        <circle cx="40" cy="40" r="26" fill="none" stroke="#6f7276" strokeWidth="1" />
        <g fontSize="10" fill="#c9c9c9" textAnchor="middle" stroke="#5c5c5c" strokeWidth="1.500" paintOrder="stroke">
          <text x="40" y="12">北</text>
          <text x="7" y="45">西</text>
          <text x="73" y="45">东</text>
          <text x="40" y="78">南</text>
        </g>
      </>
    )}
    {(kind === 'front' || kind === 'left') && (
      <>
        <ellipse cx="40" cy="57" rx="38" ry="2" fill="none" stroke="#a4a8ac" strokeWidth="2" strokeDasharray="14 2" />
        <ellipse cx="40" cy="56" rx="20" ry="2" fill="#6e6e6e" />
      </>
    )}
    {kind !== 'persp' && (
      <>
        <rect x="25" y="25" width="30" height="30" fill="#b0b0b0" stroke="#8c8c8c" />
        <rect x="30.5" y="30.5" width="19" height="19" fill="#a5a6a9" />
        <text x="40" y="45" fontSize="14" fill="#7a7a7a" textAnchor="middle">
          {kind === 'top' ? '上' : kind === 'front' ? '前' : '左'}
        </text>
      </>
    )}
    {kind === 'persp' && (
      <>
        <ellipse cx="40" cy="57" rx="32" ry="18" fill="#6d6d6d" fillOpacity=".5" stroke="#a4a8af" strokeWidth="5" />
        <path d="M40 20l20 9-1 24-19 10-19-10-2-24z" fill="#a7a7a7" />
        <path d="M40 20l20 9-20 9-21-9z" fill="#b3b3b3" />
        <path d="M40 38l20-9-1 24-19 10z" fill="#9d9d9d" />
        <g fontSize="11" fill="#808080" textAnchor="middle">
          <text x="30" y="51">左</text>
          <text x="50" y="51">前</text>
        </g>
        <g fontSize="9" fill="#b9b9b9" textAnchor="middle" stroke="#666" strokeWidth="1.500" paintOrder="stroke">
          <text x="13" y="73">西</text>
          <text x="68" y="73">南</text>
        </g>
      </>
    )}
  </svg>
);

const red = '#a81f1f';
const green = '#169016';
const blue = '#12129a';

const Tripod = ({ kind }: { kind: View['kind'] }) => (
  <svg viewBox="0 0 70 56" className="absolute bottom-2 left-0 h-14 w-[70px]" fontFamily="DejaVu Sans, sans-serif" fontSize="10" fontWeight="700">
    {kind === 'top' && (
      <>
        <path d="M24.500 38V13" stroke={green} />
        <path d="M25 38.500h26" stroke={red} />
        <text x="25" y="15" fill={green}>y</text>
        <text x="50" y="41" fill={red}>x</text>
        <text x="25" y="42" fill={blue}>z</text>
      </>
    )}
    {kind === 'front' && (
      <>
        <path d="M24.500 39V13" stroke={blue} />
        <path d="M25 38.500h26" stroke={red} />
        <text x="25" y="15" fill={blue}>z</text>
        <text x="50" y="41" fill={red}>x</text>
        <text x="25" y="41" fill={green}>y</text>
      </>
    )}
    {kind === 'left' && (
      <>
        <path d="M24.500 39V13" stroke={blue} />
        <path d="M6 38.500h18" stroke={green} />
        <text x="25" y="15" fill={blue}>z</text>
        <text x="25" y="42" fill={red}>x</text>
        <text x="1" y="41" fill={green}>y</text>
      </>
    )}
    {kind === 'persp' && (
      <>
        <path d="M24.500 38V16" stroke={blue} />
        <path d="M25 38l18-9" stroke={red} />
        <path d="M24 38l-13-7" stroke={green} />
        <text x="25" y="17" fill={blue}>z</text>
        <text x="43" y="31" fill={red}>x</text>
        <text x="7" y="32" fill={green}>y</text>
      </>
    )}
  </svg>
);

const Viewport = ({ view }: { view: View }) => (
  <section
    className={`relative overflow-hidden border-2 ${view.kind === 'left' ? 'border-[#77683a]' : 'border-[#333]'} ${
      view.kind === 'persp' ? 'bg-linear-to-b from-[#5b5b5b] to-[#949494]' : 'bg-[#808080]'
    }`}
  >
    {view.kind === 'persp' ? <PerspectiveGrid /> : <FlatGrid />}
    <div className="absolute top-1.5 left-1 flex gap-[5px] text-xs leading-4 text-[#cfcfcf] [text-shadow:1px_1px_0_#444]">
      <button>[+]</button>
      <button>[{view.name} ]</button>
      <button>[标准 ]</button>
      <button>[{view.shading} ]</button>
    </div>
    <ViewCube kind={view.kind} />
    <Tripod kind={view.kind} />
  </section>
);

/* ---------- command panel ---------- */

const Rollout = ({ title, children }: { title: string } & IconProps) => (
  <section className="rounded-xs border border-[#434343] bg-[#515151]">
    <header className="flex h-5 items-center pr-[7px] pl-1.5">
      <svg viewBox="0 0 6 5" className="mr-1.5 h-[5px] w-1.5"><path d="M0 0h6L3 5z" fill="#ccc" /></svg>
      <h2 className="flex-1 text-[13px] leading-5 font-bold text-white">{title}</h2>
      <svg viewBox="0 0 6 6" className="size-1.5" fill="#a0a0a0">
        <path d="M0 0h1v1H0zM2 0h1v1H2zM4 0h1v1H4zM0 2h1v1H0zM2 2h1v1H2zM4 2h1v1H4zM0 4h1v1H0zM2 4h1v1H2zM4 4h1v1H4z" />
      </svg>
    </header>
    {children}
  </section>
);

const panelTabs = [
  { name: '创建', art: <path d="M12 3v18M3 12h18" stroke="#eee" strokeWidth="2" /> },
  {
    name: '修改',
    art: (
      <g fill="none">
        <path d="M6 5h12M6 19h12M5 6v12M19 6v12" stroke="#459793" strokeDasharray="4 2" />
        <path d="M3.500 3.500h3v3h-3zM17.500 3.500h3v3h-3zM3.500 17.500h3v3h-3zM17.500 17.500h3v3h-3z" stroke="#459793" />
        <path d="M8 17c0-6 3-9 9-9" stroke="#a9a9a9" strokeWidth="2" />
      </g>
    ),
  },
  {
    name: '层次',
    art: (
      <>
        <path d="M6 4h12v6H6z" fill="#a0a0a0" />
        <path d="M12 10v9M6 18v-4h12v4" fill="none" stroke="#459793" strokeWidth="1.5" />
        <path d="M4 17h4v4H4zM16 17h4v4h-4z" fill="#459793" />
      </>
    ),
  },
  {
    name: '运动',
    art: (
      <>
        <path d="M9 6c-4 3-4 9 0 12M6 6c-4 3-4 9 0 12" fill="none" stroke="#459793" strokeWidth="1.5" />
        <circle cx="15" cy="12" r="7" fill="#a6a6a6" />
      </>
    ),
  },
  { name: '显示', art: <path d="M3 5h18v11H3zM8 18h8v2H8z" fill="#a0a0a0" /> },
  {
    name: '实用程序',
    art: (
      <>
        <path d="M9 9l10 10" stroke="#a6a6a6" strokeWidth="3.5" strokeLinecap="round" />
        <path d="M4 7a5 5 0 006 4 4 4 0 001-6L8 8 6 7 5 5z" fill="#a6a6a6" />
      </>
    ),
  },
];

const categories = [
  { name: '几何体', art: <circle cx="11" cy="10" r="7" fill="#e0e0e0" /> },
  {
    name: '图形',
    art: (
      <>
        <circle cx="7" cy="8" r="5" fill="#dcdcdc" />
        <path d="M7 7h9v9H7z" fill="#dcdcdc" stroke="#444" />
        <path d="M8 13l4-5v5z" fill="#444" />
      </>
    ),
  },
  { name: '灯光', art: <path d="M10 3a5 5 0 013 8.500V14H7v-2.500A5 5 0 0110 3zM8 15h4v2H8z" fill="#dcdcdc" /> },
  { name: '摄影机', art: <path d="M3 5h10v10H3zM14 9l3-4v10l-3-4z" fill="#dcdcdc" /> },
  { name: '辅助对象', art: <path d="M3 3l14 14H3zM7 11v3h3z" fill="#dcdcdc" fillRule="evenodd" /> },
  { name: '空间扭曲', art: <path d="M3 6c5-3 8 2 14-1M3 10.500c5-3 8 2 14-1M3 15c5-3 8 2 14-1" fill="none" stroke="#cfcfcf" strokeWidth="1.5" /> },
  {
    name: '系统',
    art: (
      <g fill="none" stroke="#cfcfcf" strokeWidth="1.5">
        <circle cx="5" cy="6" r="2.5" />
        <circle cx="12.500" cy="12.500" r="4" />
        <circle cx="11" cy="4" r="1" />
        <path d="M12.500 7v2M12.500 16v2M7 12.500h2M16.500 12.500h2" />
      </g>
    ),
  },
];

const CommandPanel = () => (
  <aside className="relative flex w-[237px] shrink-0 flex-col pb-0.5">
    <GripH className="mt-[7px] ml-[7px]" />
    <div className="mt-1 ml-1.5 flex min-h-0 flex-1 flex-col border border-r-0 border-[#3b3b3b]">
      <div className="flex">
        {panelTabs.map((tab, i) => (
          <button
            key={tab.name}
            aria-label={tab.name}
            className={`flex h-[25px] items-center justify-center rounded-t-xs border-r-2 border-[#444] ${i === 0 ? 'w-[30px]' : 'w-8 bg-[#3b3b3b]'}`}
          >
            <svg viewBox="0 0 24 24" className="size-[22px]">{tab.art}</svg>
          </button>
        ))}
      </div>
      <div className="mt-[7px] flex gap-0.5 pl-1">
        {categories.map((c, i) => (
          <button key={c.name} aria-label={c.name} className={`size-5 rounded-xs ${i === 0 ? 'bg-[#5b86c3]' : ''}`}>
            <svg viewBox="0 0 20 20" className="size-5">{c.art}</svg>
          </button>
        ))}
      </div>
      <div className="relative mt-1.5 ml-[3px]">
        <DropSelect label="几何体类别" value="标准基本体" className="h-5 w-full pl-1 text-xs" />
        <svg viewBox="0 0 6 4" className="pointer-events-none absolute top-2 right-[5px] h-1 w-1.5"><path d="M0 0h6L3 4z" fill="#eee" /></svg>
      </div>
      <div className="mt-[5px] mr-[5px] ml-[3px] flex flex-col gap-[3px]">
        <Rollout title="对象类型">
          <label className="flex h-[18px] items-center gap-[3px] pl-[62px] text-xs leading-4 text-[#8f8f8f]">
            <input type="checkbox" disabled className="size-[11px] appearance-none border border-[#474747] bg-[#4c4c4c]" />
            自动栅格
          </label>
          <div className="mt-0.5 grid grid-cols-[78px_78px] justify-center gap-[5px] pb-[5px]">
            {objectTypes.map((name) => (
              <button
                key={name}
                className={`h-4 rounded-xs bg-[#616161] text-[#e2e2e2] shadow-[0_0_0_1px_#484848] ${
                  name === 'tyFlow' ? "font-['DejaVu_Sans_Mono',monospace] text-[10px] leading-4" : 'text-xs leading-4'
                }`}
              >
                {name}
              </button>
            ))}
          </div>
        </Rollout>
        <Rollout title="名称和颜色">
          <div className="flex justify-center gap-1 pt-[5px] pb-2">
            <input aria-label="对象名称" className="h-5 w-[131px] border border-[#4a4a4a] bg-[#585858] px-1 text-xs" />
            <button aria-label="对象颜色" className="h-5 w-[17px] border border-black bg-white" />
          </div>
        </Rollout>
      </div>
    </div>
    <div className="absolute top-[199px] right-0 h-14 w-[3px] border border-r-0 border-[#1b1f2b] bg-[#2b3145]" />
  </aside>
);

/* ---------- time slider, track bar ---------- */

const frames = Array.from({ length: 101 }, (_, i) => i);

const TimeSlider = () => (
  <div className="flex h-[26px] shrink-0 items-center gap-0.5 pl-[5px] text-[#dcdcdc]">
    <button aria-label="上一帧" className="flex h-4 w-3.5 items-center justify-center rounded-xs bg-[#5c5c5c]">
      <svg viewBox="0 0 5 8" className="h-2 w-[5px]"><path d="M4.500 0l-4 4 4 4" fill="none" stroke="#ddd" /></svg>
    </button>
    <button className="h-4 w-[123px] rounded-xs bg-[#636363] font-['DejaVu_Sans_Mono',monospace] text-[10px] leading-4">0 / 100</button>
    <button aria-label="下一帧" className="flex h-4 w-3.5 items-center justify-center rounded-xs bg-[#5c5c5c]">
      <svg viewBox="0 0 5 8" className="h-2 w-[5px]"><path d="M.5 0l4 4-4 4" fill="none" stroke="#ddd" /></svg>
    </button>
  </div>
);

const TrackBar = () => (
  <div className="ml-1 flex h-[25px] shrink-0 border-t border-black">
    <button aria-label="迷你曲线编辑器" className="flex w-[50px] items-center justify-center pr-1.5">
      <svg viewBox="0 0 16 12" className="h-3 w-4" fill="none">
        <path d="M1.500 0v12" stroke="#ccc" strokeWidth="2" strokeDasharray="1.5 1.5" />
        <path d="M6 7c1-8 3-8 4-1s2 6 4 0" stroke={teal} strokeWidth="1.5" />
      </svg>
    </button>
    <div className="mr-[43px] flex-1 bg-[#2b2b2b] pr-[7px] pl-1.5">
      <svg className="block h-6 w-full overflow-visible" fontFamily="Noto Sans CJK SC, sans-serif" fontSize="11" textAnchor="middle">
        <rect x="-3" y="1" width="8" height="23" fill="#8d871f" />
        {frames.map((f) => (
          <g key={f}>
            <line x1={`${f}%`} x2={`${f}%`} y1="0" y2={f % 5 ? 11 : 24} stroke={f % 5 ? '#6b6b6b' : '#777'} shapeRendering="crispEdges" />
            {f % 5 === 0 && <text x={`${f}%`} y="21" fill={f ? '#c6c6c6' : '#e6e08a'}>{f}</text>}
          </g>
        ))}
      </svg>
    </div>
  </div>
);

/* ---------- status bar ---------- */

const BarIcon = ({ label, className = 'w-[22px]', children }: { label: string; className?: string } & IconProps) => (
  <button aria-label={label} className={`flex h-5 shrink-0 items-center justify-center ${className}`}>
    <svg viewBox="0 0 20 20" className="size-5" fill={light}>{children}</svg>
  </button>
);

const PlaySep = () => <span className="h-[18px] w-px shrink-0 self-center bg-black" />;

const StatusBar = () => (
  <footer className="flex h-[49px] shrink-0 overflow-hidden text-xs leading-4 text-[#e8e8e8]">
    <div className="flex w-[62px] shrink-0 flex-col gap-0.5 pt-1.5">
      <input aria-label="宏录制器" className="h-[21px] w-full border-t border-r-2 border-t-[#777] border-r-white bg-[#dcc4c4]" />
      <input aria-label="侦听器" className="h-5 w-full border-t border-r-2 border-t-[#777] border-r-[#ccc] bg-white" />
    </div>
    <div className="mt-1 ml-1.5 w-px shrink-0 bg-[#252525]" />
    <div className="flex min-w-0 flex-1 flex-col gap-3 pt-[13px] pl-1 leading-3">
      <p className="whitespace-nowrap">未选定任何对象</p>
      <p className="whitespace-nowrap">单击或单击并拖动以选择对象</p>
    </div>

    <div className="flex shrink-0 flex-col">
      <div className="mt-2 flex h-5 items-center">
        <BarIcon label="孤立当前选择" className="w-[27px]">
          <path d="M5 5h10v10H5z" fill="none" stroke="#2c2c2c" strokeWidth="1.5" />
          <path d="M2 6V2h4M14 2h4v4M2 14v4h4M18 14v4h-4M5 5L2 2M15 5l3-3M5 15l-3 3M15 15l3 3" fill="none" stroke="#2c2c2c" strokeWidth="1.2" />
        </BarIcon>
        <BarIcon label="选择锁定切换" className="w-[27px]">
          <path d="M5 9h10v8H5zM7 9V6a3 3 0 016 0v3M10 12v3" fill="none" stroke="#2c2c2c" strokeWidth="1.5" />
        </BarIcon>
        <BarIcon label="绝对模式变换输入" className="w-[27px]">
          <rect x="4" y="4" width="12" height="12" fill="none" stroke={light} strokeWidth="1.5" />
          <path d="M10 5l2 3 3 2-3 2-2 3-2-3-3-2 3-2z" />
          <circle cx="10" cy="10" r="1.5" fill="#444" />
        </BarIcon>
        {['X', 'Y', 'Z'].map((axis) => (
          <label key={axis} className="flex items-center">
            <span className="w-4 text-center text-[11px]">{axis}:</span>
            <input className="mr-3 ml-px h-[18px] w-[57px] bg-[#585858]" />
          </label>
        ))}
        <span className="w-[100px] pl-1 whitespace-nowrap">栅格 = 10.0</span>
      </div>
      <div className="mt-[5px] flex justify-end">
        <button className="flex w-[123px] items-start gap-1">
          <span className="flex h-4 w-[22px] items-center justify-center rounded-xs bg-[#5b86c3]">
            <svg viewBox="0 0 16 16" className="size-4" fill="none" stroke="#1d2c44"><path d="M8 1l6 3v7l-6 4-6-4V4zM2 4l6 3 6-3M8 7v8" fill="#c9d6ea" /></svg>
          </span>
          <span className="mt-1 leading-3 whitespace-nowrap">添加时间标记</span>
        </button>
      </div>
    </div>

    <div className="ml-2.5 flex w-[124px] shrink-0 flex-col gap-0.5 pt-2">
      <div className="flex">
        <BarIcon label="转至开头" className="w-[25px]"><path d="M3 5h1.500v10H3zM11 5v10l-6-5zM18 5v10l-6-5z" /></BarIcon>
        <PlaySep />
        <BarIcon label="上一帧" className="w-[25px]"><path d="M10 5v10l-8-5zM11.500 5h2v10h-2zM15 5h2v10h-2z" /></BarIcon>
        <BarIcon label="播放动画"><path d="M4 3l12 7-12 7z" /><path d="M20 16v4h-4z" /></BarIcon>
        <BarIcon label="下一帧" className="w-[25px]"><path d="M10 5v10l8-5zM3 5h2v10H3zM6.500 5h2v10h-2z" /></BarIcon>
        <PlaySep />
        <BarIcon label="转至结尾" className="w-[25px]"><path d="M15.500 5H17v10h-1.500zM2 5v10l6-5zM9 5v10l6-5z" /></BarIcon>
      </div>
      <div className="flex">
        <BarIcon label="关键点模式切换" className="w-[25px]"><path d="M9 6v8l-5-4zM11 6v8l5-4z" /></BarIcon>
        <PlaySep />
        <div className="relative mx-0.5 w-[68px]">
          <input aria-label="当前帧" defaultValue="0" className="mt-0.5 block h-[17px] w-full bg-[#5c5c5c] pl-1 text-[11px]" />
          <svg viewBox="0 0 6 10" className="absolute top-1.5 right-1 h-2.5 w-1.5"><path d="M0 4l3-4 3 4zM0 6l3 4 3-4z" fill="#ddd" /></svg>
        </div>
        <PlaySep />
        <BarIcon label="时间配置" className="w-[25px]">
          <circle cx="8" cy="8" r="6" />
          <path d="M8 4v4h3" fill="none" stroke="#333" />
          <circle cx="14" cy="13" r="3.5" fill="none" stroke="#e5a92f" strokeWidth="2.5" />
        </BarIcon>
      </div>
    </div>

    <button aria-label="设置关键点" className="mt-2 ml-2.5 flex h-[42px] w-10 shrink-0 items-center justify-center rounded-xs bg-[#636363]">
      <svg viewBox="0 0 36 36" className="size-9">
        <path d="M13 5h6v10h10v6H19v9h-6v-9H4v-6h9z" fill={light} stroke="#2e2e2e" />
        <path d="M23 28l9-9M28 22l3 3M31 19l3 3" stroke={teal} strokeWidth="2.5" />
        <circle cx="21" cy="29" r="3.5" fill="#636363" stroke={teal} strokeWidth="2.5" />
      </svg>
    </button>
    <div className="mt-2 ml-[5px] flex w-[65px] shrink-0 flex-col gap-0.5">
      <button className="h-5 rounded-xs bg-[#5f5f5f] whitespace-nowrap">自动关键点</button>
      <button className="h-5 rounded-xs bg-[#5f5f5f] whitespace-nowrap">设置关键点</button>
    </div>
    <div className="mt-2 ml-[5px] flex w-[111px] shrink-0 flex-col gap-1">
      <div className="relative">
        <DropSelect label="选择集" value="选定对象" className="h-[18px] w-full pl-1 text-xs" />
        <svg viewBox="0 0 6 5" className="pointer-events-none absolute top-[7px] right-2 h-[5px] w-1.5"><path d="M0 0h6L3 5z" fill="#eee" /></svg>
      </div>
      <div className="flex gap-1">
        <BarIcon label="切线类型">
          <path d="M8 4h4v4H8z" fill="none" stroke={light} strokeWidth="1.5" />
          <path d="M3 5h5M12 5h5" stroke={light} />
          <path d="M3 18C6 15 7 10 6 6M17 18c-3-3-4-8-3-12" fill="none" stroke={teal} strokeWidth="2" />
        </BarIcon>
        <button className="flex h-5 w-[85px] items-center justify-end rounded-xs bg-[#5f5f5f] whitespace-nowrap">关键点过滤器...</button>
      </div>
    </div>
    <div className="mt-2 mr-1 ml-3.5 grid shrink-0 grid-cols-4 gap-x-px gap-y-[3px]">
      <BarIcon label="缩放"><circle cx="12" cy="7" r="5" fill="none" stroke={light} strokeWidth="1.8" /><path d="M8 11l-6 6" stroke={light} strokeWidth="2.5" /></BarIcon>
      <BarIcon label="缩放所有视图">
        <path d="M8 2h5v5H8zM14 2h5v5h-5zM14 8h5v5h-5z" fill={teal} />
        <circle cx="9" cy="10" r="4" fill="#444" stroke={light} strokeWidth="1.8" />
        <path d="M6 13l-4 4" stroke={light} strokeWidth="2.5" />
      </BarIcon>
      <BarIcon label="最大化显示选定对象">
        <path d="M2 6V2h4M14 2h4v4M2 13v4h4" fill="none" stroke={light} strokeWidth="1.5" />
        <path d="M10 4l5 2v7l-5 2-5-2V6z" fill={teal} /><path d="M5 6l5 2 5-2M10 8v7" fill="none" stroke="#2c6f6c" />
        <path d="M20 15v4h-4z" />
      </BarIcon>
      <BarIcon label="所有视图最大化显示">
        <path d="M11 4l4-2 3 2v8l-3 2-4-2z" fill={teal} />
        <circle cx="4" cy="12" r="2.5" /><circle cx="8" cy="8" r="2" /><circle cx="8" cy="15" r="2" />
        <path d="M20 15v4h-4z" />
      </BarIcon>
      <BarIcon label="缩放区域">
        <path d="M3 3h14v13H3z" fill="none" stroke={light} strokeWidth="1.5" strokeDasharray="3 2" />
        <circle cx="11" cy="9" r="4" fill="none" stroke={teal} strokeWidth="2" /><path d="M8 12l-4 5" stroke={teal} strokeWidth="2" />
      </BarIcon>
      <BarIcon label="平移视图">
        <path d="M6 10V5M9 9V3M12 9V3M15 10V5M6 13l-3-3" fill="none" stroke={light} strokeWidth="2" strokeLinecap="round" />
        <path d="M5 9h11v5l-3 5H9l-4-5z" />
        <path d="M20 15v4h-4z" />
      </BarIcon>
      <BarIcon label="环绕">
        <circle cx="10" cy="8" r="6" /><path d="M10 2v6H4a6 6 0 016-6z" fill={teal} />
        <path d="M2 14c2 5 14-1 16-10" fill="none" stroke={light} strokeWidth="2" />
        <path d="M20 15v4h-4z" />
      </BarIcon>
      <BarIcon label="最大化视口切换">
        <path d="M3 3h14v15H3z" /><path d="M7 13l7-7M10 5h5v5M5 11v5h5" fill="none" stroke="#333" strokeWidth="1.8" />
      </BarIcon>
    </div>
  </footer>
);

export default function App() {
  return (
    <div className="flex h-screen flex-col overflow-hidden bg-[#444] font-['Noto_Sans_CJK_SC',sans-serif]">
      <MainToolbar />
      <RenderToolbar />
      <Ribbon />
      <main className="flex min-h-0 flex-1">
        <LeftDock />
        <div className="grid min-w-0 flex-1 grid-cols-2 grid-rows-2 gap-1 pt-[5px]">
          {views.map((view) => (
            <Viewport key={view.kind} view={view} />
          ))}
        </div>
        <CommandPanel />
      </main>
      <TimeSlider />
      <TrackBar />
      <StatusBar />
    </div>
  );
}
